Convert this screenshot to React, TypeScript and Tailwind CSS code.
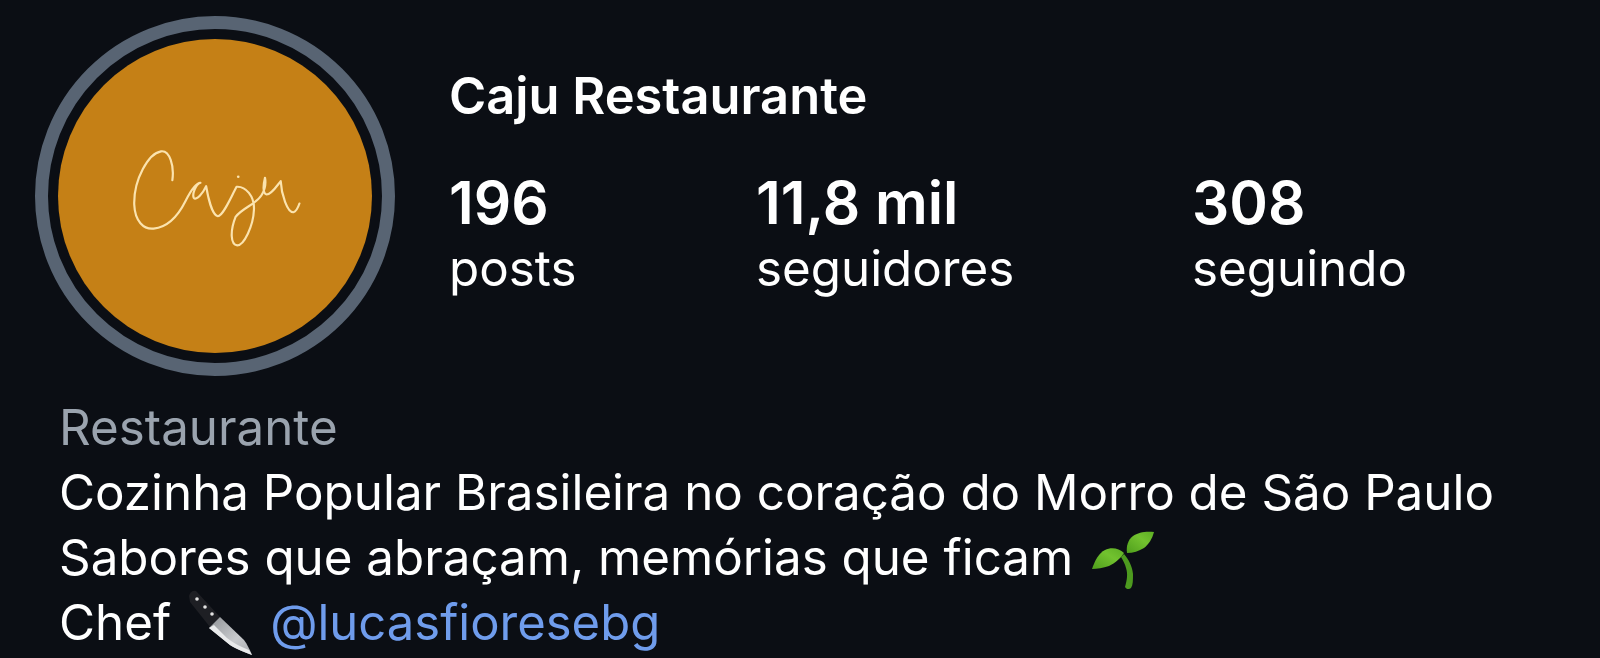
export default function App() {
  return (
    <div className="w-full h-[658px] overflow-hidden bg-[#0b0e14] text-white font-['Inter','Liberation_Sans',sans-serif] antialiased">
      <div className="flex pt-[16px] pl-[35px]">
        <div className="w-[360px] h-[360px] shrink-0 rounded-full border-[13px] border-[#586473] p-[10px]">
          <div className="w-full h-full rounded-full bg-[#c58016]">
            <svg viewBox="0 0 313 313" className="w-full h-full" fill="none">
              <g transform="translate(52 90) scale(0.33333)" stroke="#fbe3ae" strokeWidth="6.5" strokeLinecap="round" strokeLinejoin="round">
                <path d="M186 152 C192 110 178 62 152 66 C115 72 70 150 72 225 C74 275 100 300 130 297 C175 292 205 255 225 215 C235 195 255 160 270 160 C255 165 245 195 250 205 C258 215 278 190 287 170 C292 200 305 258 322 260 C338 258 360 205 378 172 C405 170 432 200 430 240 C428 290 400 347 380 347 C360 345 358 305 375 262 C395 235 435 225 452 198 C462 182 466 160 463 145 C458 165 455 192 468 195 C482 195 498 170 510 155 C512 195 530 250 548 248 C556 246 562 234 566 222" />
                <circle cx="383" cy="142" r="4" fill="#fbe3ae" stroke="none" />
              </g>
            </svg>
          </div>
        </div>
        <div className="pl-[54px] pt-[48px]">
          <div className="text-[50.6px] leading-[64px] font-semibold">Caju Restaurante</div>
          <div className="flex mt-[43px]">
            <div className="w-[307px]">
              <div className="text-[58.6px] leading-[64px] font-semibold">196</div>
              <div className="text-[49.3px] leading-[67px]">posts</div>
            </div>
            <div className="w-[436px]">
              <div className="text-[58.6px] leading-[64px] font-semibold">11,8 mil</div>
              <div className="text-[49.3px] leading-[67px]">seguidores</div>
            </div>
            <div>
              <div className="text-[58.6px] leading-[64px] font-semibold">308</div>
              <div className="text-[49.3px] leading-[67px]">seguindo</div>
            </div>
          </div>
        </div>
      </div>
      <div className="pl-[59px] pt-[19px] text-[49.3px] leading-[65px]">
        <div className="text-[#9aa3ae]">Restaurante</div>
        <div>Cozinha Popular Brasileira no coração do Morro de São Paulo</div>
        <div className="flex items-center">
          <span>Sabores que abraçam, memórias que ficam</span>
          <svg viewBox="0 0 64 60" className="w-[64px] h-[60px] ml-[18px] mt-[4px] shrink-0">
            <defs>
              <linearGradient id="leaf" x1="0" y1="1" x2="1" y2="0">
                <stop offset="0" stopColor="#4f9e1c" />
                <stop offset="0.6" stopColor="#72c22f" />
                <stop offset="1" stopColor="#5dae24" />
              </linearGradient>
            </defs>
            <path d="M33 24 C38 30 41 36 42 44 C42 50 42 55 40 58 C38 60 35 59 34 57 C36 50 37 44 35 38 C34 34 32 30 30 27 Z" fill="#4d9a1f" />
            <path d="M1 39 C4 30 8 23 14 20 C20 17 28 18 33 23 C30 28 24 33 18 36 C12 38 6 39 1 39 Z" fill="url(#leaf)" />
            <path d="M36 23 C35 16 37 10 42 6 C47 2 56 1 63 2 C61 9 58 14 53 18 C48 21 42 23 36 23 Z" fill="url(#leaf)" />
          </svg>
        </div>
        <div className="flex items-center">
          <span>Chef</span>
          <svg viewBox="0 0 66 65" className="w-[66px] h-[65px] ml-[16px] shrink-0">
            <defs>
              <linearGradient id="blade" x1="0" y1="0" x2="1" y2="1">
                <stop offset="0" stopColor="#8f9296" />
                <stop offset="0.6" stopColor="#c9cbce" />
                <stop offset="1" stopColor="#a8abaf" />
              </linearGradient>
            </defs>
            <path d="M2 6 C3 2 6 0 9 1 L33 27 L23 37 L3 12 Z" fill="#1e1f24" />
            <circle cx="10" cy="9" r="1.8" fill="#e2e2e2" />
            <circle cx="18" cy="17" r="1.8" fill="#e2e2e2" />
            <circle cx="25" cy="24" r="1.8" fill="#e2e2e2" />
            <path d="M33 27 L57 50 C60 54 63 60 65 65 C56 62 48 58 43 55 L22 38 Z" fill="url(#blade)" />
            <path d="M22 38 L43 55 C48 58 56 62 65 65 L62 60 C54 57 46 53 40 48 L27 35 Z" fill="#e9eaeb" />
          </svg>
          <span className="ml-[17px] text-[#6f9cec] text-[49px]">@lucasfioresebg</span>
        </div>
      </div>
    </div>
  );
}
